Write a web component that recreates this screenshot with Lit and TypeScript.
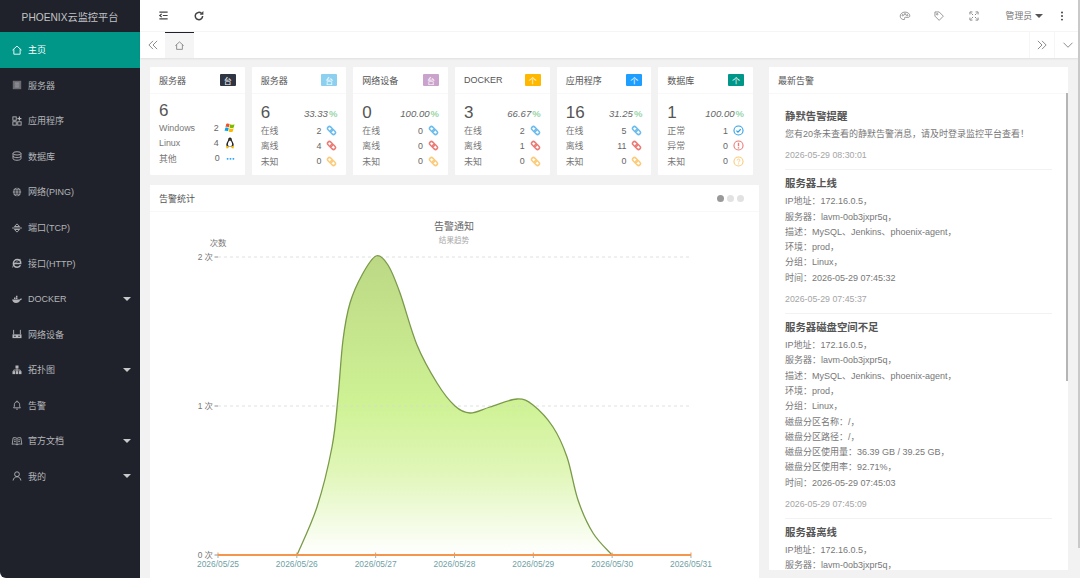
import { LitElement, html, css, svg } from 'lit';
import { customElement } from 'lit/decorators.js';

const icons: Record<string, any> = {
  home: svg`<path d="M2 8.2 8 2.8l6 5.4M3.8 7v6.6h8.4V7" />`,
  server: svg`<rect x="3" y="3" width="10" height="10" fill="currentColor" opacity=".55" /><path d="M5.5 5.5h5M5.5 8h5M5.5 10.5h5" stroke-width=".8" />`,
  app: svg`<rect x="2.5" y="2.5" width="4.5" height="4.5" /><rect x="2.5" y="9" width="4.5" height="4.5" /><rect x="9" y="9" width="4.5" height="4.5" /><path d="M11.2 2v5.4M8.5 4.7h5.4" stroke-width="1.6" />`,
  db: svg`<ellipse cx="8" cy="4.5" rx="5.3" ry="2.2" /><path d="M2.7 4.5v7c0 1.2 2.4 2.2 5.3 2.2s5.3-1 5.3-2.2v-7M2.7 8c0 1.2 2.4 2.2 5.3 2.2s5.3-1 5.3-2.2" />`,
  globe: svg`<circle cx="8" cy="8" r="5.6" fill="currentColor" opacity=".8" stroke="none" /><path d="M2.5 6.4h11M2.5 9.6h11M8 2.4c-3 3.4-3 7.8 0 11.2M8 2.4c3 3.4 3 7.8 0 11.2" stroke="#1f222b" stroke-width=".8" />`,
  port: svg`<path d="M8 2.5 11.5 6h-7zM8 13.5 11.5 10h-7zM1.5 8h13" />`,
  ie: svg`<path d="M3.5 8.6h9.4c.4-3.2-1.6-5.2-4.4-5.2-3.2 0-5.3 2.4-5.3 5.2 0 2.8 2 4.9 5.1 4.9 2.1 0 3.6-.9 4.3-2.5" stroke-width="2" /><path d="M2 14c0-2 4-8 11-11" stroke-width=".9" />`,
  docker: svg`<path fill="currentColor" stroke="none" d="M1.5 8.5h10c.5-1 1.6-1.3 3-1-.4 1.4-1.3 2-2.4 2.1-.8 2.3-2.6 3.6-5.4 3.6-3 0-4.6-1.7-5.2-4.7z" /><path fill="currentColor" stroke="none" d="M4 6h2v2H4zM6.6 6h2v2h-2zM6.6 3.6h2v2h-2z" />`,
  device: svg`<rect x="2" y="8.5" width="12" height="5" fill="currentColor" stroke="none" /><path d="M3.5 8.5V2.500M12.500 8.500V2.500" /><path d="M4 11h2.500M9.500 11H12" stroke="#1f222b" />`,
  tree: svg`<g fill="currentColor" stroke="none"><rect x="6" y="2" width="4" height="4" /><rect x="2" y="9.5" width="3.4" height="4" /><rect x="6.3" y="9.5" width="3.4" height="4" /><rect x="10.6" y="9.5" width="3.4" height="4" /></g><path d="M8 6v3.5M3.700 9.500V8h8.600v1.500" />`,
  bell: svg`<path d="M3.5 11.8c1-1 1-2.200 1-4.200 0-2.200 1.500-4 3.500-4s3.500 1.800 3.500 4c0 2 0 3.200 1 4.200zM7 13.600h2M8 2.200v1.400" />`,
  book: svg`<path d="M8 4.600C6.400 3.400 4.400 3.200 2.800 3.800L1.600 12.400c2-.6 4.600-.6 6.400.8 1.800-1.400 4.400-1.400 6.400-.8L13.200 3.800C11.600 3.200 9.600 3.400 8 4.600zM8 4.600v8.600M4 6.400h2.400M4 8.800h2.400M9.600 6.400H12M9.600 8.800H12" stroke-width="1.100" />`,
  user: svg`<circle cx="8" cy="5.600" r="3.200" /><path d="M2.800 14c.4-3 2.600-5 5.200-5s4.800 2 5.200 5" />`,
  fold: svg`<path d="M2 3h12M7 8h7M2 13h12M5.400 5.600 2.600 8l2.800 2.400" stroke-width="1.800" />`,
  refresh: svg`<path d="M12.800 8a4.900 4.900 0 1 1-1.500-3.500" stroke-width="2" /><path d="M13.800 1.400v4.800H9z" fill="currentColor" stroke="none" />`,
  palette: svg`<path d="M8 2.800C4.400 2.800 1.600 5.200 1.600 8.200c0 2.600 2.200 4.600 5 4.600 1.200 0 1-.9.8-1.600-.3-1 .3-1.600 1.400-1.500l3 .2c1.700 0 2.600-.9 2.600-2.200 0-2.700-2.800-4.900-6.400-4.900z" /><circle cx="5" cy="7" r=".9" /><circle cx="8" cy="5.600" r=".9" /><circle cx="11" cy="7" r=".9" />`,
  tag: svg`<path d="M2.600 2.600h5.600l5.600 5.600-5.600 5.600-5.600-5.600z" /><circle cx="5.600" cy="5.600" r="1" />`,
  full: svg`<path d="M1.500 5.500v-4h4M10.500 1.500h4v4M14.500 10.500v4h-4M5.500 14.500h-4v-4M6.500 6.500 4 4M9.500 6.500 12 4M9.500 9.500 12 12M6.500 9.500 4 12" stroke-width="1.400" />`,
  more: svg`<g fill="currentColor" stroke="none"><circle cx="8" cy="3.200" r="1.300" /><circle cx="8" cy="8" r="1.300" /><circle cx="8" cy="12.800" r="1.300" /></g>`,
  left: svg`<path d="M8 2.500 2.500 8 8 13.500M13.500 2.500 8 8l5.500 5.500" />`,
  right: svg`<path d="M2.500 2.500 8 8l-5.500 5.500M8 2.500 13.500 8 8 13.500" />`,
  down: svg`<path d="M2 5l6 6 6-6" />`,
  link: svg`<g transform="rotate(45 8 8)"><rect x="1" y="5.200" width="8" height="5.600" rx="2.800" stroke-width="2.200" /><rect x="7" y="5.200" width="8" height="5.600" rx="2.800" stroke-width="2.200" /></g>`,
  windows: svg`<g stroke="none"><path fill="#f25022" d="M3 2.600c1.600-.8 3-.6 4.500.2L6.600 7.100C5 6.400 3.600 6.200 2 6.900z" /><path fill="#7fba00" d="M8.200 3.100c1.800.9 3.400 1 5.800 0l-1 4.300c-1.800.9-3.800.9-5.600 0z" /><path fill="#00a4ef" d="M1.800 7.700c1.500-.7 3-.5 4.500.2l-.9 4.300c-1.600-.7-3.100-.9-4.600-.2z" /><path fill="#ffb900" d="M7.200 8.200c1.800.9 3.600.9 5.600 0l-1 4.300c-1.800.9-3.800.9-5.500 0z" /></g>`,
  linux: svg`<g stroke="none"><path fill="#222" d="M8 .8c-1.700 0-2.500 1.300-2.400 3 .1 1.400-1.900 3.300-2.400 5.400-.3 1.300.2 3.300 1 3.500h7.600c.8-.2 1.300-2.200 1-3.500-.5-2.100-2.500-4-2.400-5.400.1-1.700-.7-3-2.400-3z" /><path fill="#fff" d="M8 4.800c-1.300 0-2.800 3-2.800 5.200 0 1.500 1.200 2.400 2.800 2.400s2.800-.9 2.800-2.400c0-2.200-1.500-5.200-2.800-5.200z" /><path fill="#f5b800" d="M2.600 12.400l2.800-.9.9 3-2.800.7zM13.400 12.400l-2.800-.9-.9 3 2.800.7zM6.900 3.500h2.200L8 4.600z" /></g>`,
  dots: svg`<g fill="#1e9fff" stroke="none"><circle cx="3.800" cy="8.500" r="1.400" /><circle cx="8" cy="8.500" r="1.400" /><circle cx="12.200" cy="8.500" r="1.400" /></g>`,
  ok: svg`<circle cx="8" cy="8" r="6.600" stroke-width="1.600" /><path d="M5 8.200l2.200 2.200 4-4.200" stroke-width="1.800" />`,
  warn: svg`<circle cx="8" cy="8" r="6.600" stroke-width="1.600" /><path d="M8 4v5M8 10.600v1.600" stroke-width="2" />`,
  ask: svg`<circle cx="8" cy="8" r="6.600" stroke-width="1.600" /><path d="M6 6.400c0-2.600 4-2.600 4-.2 0 1.400-2 1.500-2 3.200M8 10.800v1.400" stroke-width="1.400" />`,
};

const icon = (name: string, cls = '') => html`<svg class="ic ${cls}" viewBox="0 0 16 16">${icons[name]}</svg>`;

const menu = [
  ['home', '主页'], ['server', '服务器'], ['app', '应用程序'], ['db', '数据库'],
  ['globe', '网络(PING)'], ['port', '端口(TCP)'], ['ie', '接口(HTTP)'],
  ['docker', 'DOCKER', 1], ['device', '网络设备'], ['tree', '拓扑图', 1],
  ['bell', '告警'], ['book', '官方文档', 1], ['user', '我的', 1],
];

const linkRows = (a: number, b: number, c: number) => [
  ['在线', a, 'link', 'blue'], ['离线', b, 'link', 'red'], ['未知', c, 'link', 'amber'],
];

const cards: any[] = [
  { title: '服务器', badge: '台', tone: 'dark', num: '6', first: true,
    rows: [['Windows', 2, 'windows', ''], ['Linux', 4, 'linux', ''], ['其他', 0, 'dots', '']] },
  { title: '服务器', badge: '台', tone: 'sky', num: '6', pct: '33.33', rows: linkRows(2, 4, 0) },
  { title: '网络设备', badge: '台', tone: 'purple', num: '0', pct: '100.00', rows: linkRows(0, 0, 0) },
  { title: 'DOCKER', badge: '个', tone: 'yellow', num: '3', pct: '66.67', rows: linkRows(2, 1, 0) },
  { title: '应用程序', badge: '个', tone: 'blue', num: '16', pct: '31.25', rows: linkRows(5, 11, 0) },
  { title: '数据库', badge: '个', tone: 'teal', num: '1', pct: '100.00',
    rows: [['正常', 1, 'ok', 'strong'], ['异常', 0, 'warn', 'red'], ['未知', 0, 'ask', 'amber']] },
];

const host = ['IP地址：172.16.0.5，', '服务器：lavm-0ob3jxpr5q，', '描述：MySQL、Jenkins、phoenix-agent，', '环境：prod，', '分组：Linux，'];

const alerts = [
  { title: '静默告警提醒', lines: ['您有20条未查看的静默告警消息，请及时登录监控平台查看！'], at: '2026-05-29 08:30:01' },
  { title: '服务器上线', lines: [...host, '时间：2026-05-29 07:45:32'], at: '2026-05-29 07:45:37' },
  { title: '服务器磁盘空间不足',
    lines: [...host, '磁盘分区名称：/，', '磁盘分区路径：/，', '磁盘分区使用量：36.39 GB / 39.25 GB，', '磁盘分区使用率：92.71%，', '时间：2026-05-29 07:45:03'],
    at: '2026-05-29 07:45:09' },
  { title: '服务器离线', lines: [...host, '时间：2026-05-29 07:40:12'], at: '2026-05-29 07:40:17' },
];

const days = ['2026/05/25', '2026/05/26', '2026/05/27', '2026/05/28', '2026/05/29', '2026/05/30', '2026/05/31'];

// traced from the reference, smoothed below
const pts = [[147, 343], [167, 295], [182, 235], [188, 185], [193, 128], [200, 91], [212, 63], [226, 44], [238, 53], [250, 81], [267, 133], [287, 171], [305, 194], [320, 201], [340, 195], [367, 187], [383, 193], [403, 215], [417, 245], [428, 288], [443, 321], [462, 343]];

const smooth = (p: number[][]) => {
  let d = `M${p[0][0]} ${p[0][1]}`;
  for (let i = 0; i < p.length - 1; i++) {
    const a = p[Math.max(i - 1, 0)], b = p[i], c = p[i + 1], e = p[Math.min(i + 2, p.length - 1)];
    const c1 = [b[0] + (c[0] - a[0]) / 6, b[1] + (c[1] - a[1]) / 6];
    const c2 = [c[0] - (e[0] - b[0]) / 6, c[1] - (e[1] - b[1]) / 6];
    d += `C${c1[0].toFixed(1)} ${c1[1].toFixed(1)} ${c2[0].toFixed(1)} ${c2[1].toFixed(1)} ${c[0]} ${c[1]}`;
  }
  return d;
};
const curve = smooth(pts);

@customElement('app-root')
class AppRoot extends LitElement {
  static styles = css`
    :host {
      display: flex;
      height: 578px;
      overflow: hidden;
      position: relative;
      background: #fff;
      font-family: "Liberation Sans", "Noto Sans CJK SC", sans-serif;
      font-size: 9px;
      color: #666;
    }
    .ic {
      width: 12px;
      height: 12px;
      flex: none;
      fill: none;
      stroke: currentColor;
      stroke-width: 1.2;
    }
    .side {
      width: 140px;
      flex: none;
      background: #1f222b;
      border-bottom-left-radius: 6px;
      color: #b4b5b8;
    }
    .logo {
      height: 32px;
      display: flex;
      align-items: center;
      justify-content: center;
      font-size: 10.2px;
      color: #c2c3c5;
    }
    .item {
      height: 35.55px;
      display: flex;
      align-items: center;
      padding: 0 8px 0 11px;
      gap: 5px;
    }
    .item.on {
      background: #009688;
      color: #fff;
    }
    .item .label {
      flex: 1;
    }
    .caret {
      width: 0;
      height: 0;
      margin-right: 1px;
      border-left: 4px solid transparent;
      border-right: 4px solid transparent;
      border-top: 4px solid #c8c9cb;
    }
    .main {
      flex: 1;
      min-width: 0;
      display: flex;
      flex-direction: column;
      background: #f2f2f2;
    }
    .top {
      height: 32px;
      flex: none;
      background: #fff;
      display: flex;
      align-items: center;
      padding-left: 18px;
      color: #444;
      border-bottom: 1px solid #f6f6f6;
      box-sizing: border-box;
    }
    .top .ic {
      width: 11px;
      height: 11px;
    }
    .top .refresh {
      width: 12px;
      height: 12px;
      margin-left: 24px;
    }
    .top-right {
      margin-left: auto;
      display: flex;
      align-items: center;
      color: #777;
    }
    .top-right .ic {
      width: 12px;
      height: 12px;
      stroke-width: 1;
    }
    .top-right .tag {
      margin-left: 22px;
    }
    .top-right .full {
      width: 10px;
      height: 10px;
      margin-left: 24px;
    }
    .admin {
      margin-left: 27px;
      font-size: 8.8px;
    }
    .admin-caret {
      margin-left: 3px;
      border-top-color: #555;
    }
    .top-right .more {
      margin: 0 12px 0 12px;
      color: #444;
    }
    .tabs {
      height: 26px;
      flex: none;
      background: #fff;
      display: flex;
      align-items: stretch;
      box-shadow: 0 1px 2px rgba(0, 0, 0, .08);
      color: #666;
    }
    .tab-btn {
      display: flex;
      align-items: center;
      justify-content: center;
      width: 25px;
    }
    .tab-btn .ic {
      width: 12px;
      height: 12px;
      stroke-width: 1;
    }
    .tab-home {
      width: 29px;
      display: flex;
      align-items: center;
      justify-content: center;
      background: #f5f5f5;
      border-top: 1px solid #1f222b;
      box-sizing: border-box;
    }
    .tab-home .ic {
      width: 11px;
      height: 11px;
      stroke-width: 1;
    }
    .tab-end {
      margin-left: auto;
      display: flex;
    }
    .tab-end .tab-btn {
      border-left: 1px solid #f6f6f6;
    }
    .tab-end .tab-btn:first-child {
      width: 24px;
    }
    .content {
      flex: 1;
      min-height: 0;
      display: flex;
      gap: 10px;
      padding: 9px 0 0 10px;
    }
    .left {
      width: 609px;
      flex: none;
      display: flex;
      flex-direction: column;
      gap: 10px;
    }
    .cards {
      display: flex;
      gap: 7px;
      padding-right: 6px;
    }
    .card {
      flex: 1;
      height: 108px;
      background: #fff;
      border-radius: 1px;
    }
    .head {
      height: 27px;
      box-sizing: border-box;
      padding: 0 9px;
      display: flex;
      align-items: center;
      justify-content: space-between;
      border-bottom: 1px solid #f8f8f8;
      color: #555;
      font-size: 9px;
    }
    .badge {
      width: 16px;
      height: 12px;
      border-radius: 1px;
      color: #fff;
      font-size: 8px;
      display: flex;
      align-items: center;
      justify-content: center;
    }
    .dark { background: #2f3542; }
    .sky { background: #8bd0ef; }
    .purple { background: #c9a3cc; }
    .yellow { background: #ffb800; }
    .azure { background: #1e9fff; }
    .teal { background: #009688; }
    .body {
      padding: 0 9px;
    }
    .stat {
      height: 29px;
      padding-top: 8px;
      box-sizing: border-box;
      display: flex;
      align-items: center;
      justify-content: space-between;
    }
    .first .stat {
      height: 26px;
    }
    .num {
      font-size: 17px;
      color: #555;
    }
    .pct {
      font-style: italic;
      font-size: 9.6px;
      color: #666;
      margin-top: 1px;
    }
    .pct b {
      font-style: normal;
      font-size: 9.5px;
      color: #9ad6a8;
      margin-left: 1px;
    }
    .row {
      height: 15.3px;
      display: flex;
      align-items: center;
      color: #777;
      font-size: 8.9px;
    }
    .row .name {
      flex: 1;
    }
    .row .val {
      color: #666;
    }
    .row .ic {
      width: 11px;
      height: 11px;
      margin-left: 5px;
    }
    .row .windows, .row .linux {
      width: 12px;
      height: 12px;
    }
    .blue { color: #6dbcec; }
    .red { color: #ea7b76; }
    .amber { color: #fbcb7a; }
    .strong { color: #2f9fe6; }
    .chart-panel {
      flex: 1;
      background: #fff;
      min-height: 0;
      overflow: hidden;
    }
    .pager {
      display: flex;
      gap: 3px;
      margin-right: 6px;
    }
    .pager i {
      width: 7px;
      height: 7px;
      border-radius: 50%;
      background: #e2e2e2;
    }
    .pager i.cur {
      background: #999;
    }
    .chart {
      display: block;
    }
    .chart text {
      font-family: "Liberation Sans", "Noto Sans CJK SC", sans-serif;
    }
    .c-title {
      font-size: 10px;
      fill: #666;
    }
    .c-sub {
      font-size: 7.6px;
      fill: #aaa;
    }
    .c-y {
      font-size: 8.4px;
      fill: #777;
    }
    .c-x {
      font-size: 8.4px;
      fill: #6f9fa6;
    }
    .grid-line {
      stroke: #d8d8d8;
      stroke-dasharray: 3 3;
      stroke-width: .8;
    }
    .tick {
      stroke: #777;
      stroke-width: .8;
    }
    .axis {
      stroke: #f5964f;
      stroke-width: 1.8;
    }
    .axis-tick {
      stroke: #f5964f;
      stroke-width: 1;
    }
    .axis-foot {
      stroke: #8fb4ba;
      stroke-width: 1;
    }
    .line {
      fill: none;
      stroke: #7a9a4a;
      stroke-width: 1.3;
    }
    .alerts {
      width: 299px;
      flex: none;
      height: 503px;
      background: #fff;
      display: flex;
      flex-direction: column;
      position: relative;
    }
    .alert-list {
      flex: 1;
      min-height: 0;
      overflow: hidden;
      padding: 15px 16px 0;
    }
    .alert + .alert {
      margin-top: 6px;
    }
    .alert h3 {
      margin: 0 0 2px;
      font-size: 10.4px;
      line-height: 16px;
      font-weight: 700;
      color: #555;
    }
    .alert p {
      margin: 0;
      font-size: 9px;
      line-height: 15.3px;
      color: #777;
      white-space: nowrap;
    }
    .alert time {
      display: block;
      margin-top: 6px;
      padding-bottom: 6px;
      font-size: 8.8px;
      line-height: 15px;
      color: #a5a5a5;
      border-bottom: 1px solid #f2f2f2;
    }
    .thumb {
      position: absolute;
      right: 0;
      top: 26px;
      width: 2px;
      height: 288px;
      background: #b5b5b5;
    }
    .page-thumb {
      position: absolute;
      right: 0;
      top: 0;
      width: 2px;
      height: 548px;
      background: #c9c9c9;
    }
  `;

  renderChart() {
    const xs = days.map((_, i) => 68 + i * 78.83);
    return html`
      <svg class="chart" width="609" height="366" viewBox="0 0 609 366">
        <defs>
          <linearGradient id="area" x1="0" y1="0" x2="0" y2="1">
            <stop offset="0" stop-color="#bcd885"></stop>
            <stop offset=".5" stop-color="#cff295"></stop>
            <stop offset=".72" stop-color="#e0f6b8"></stop>
            <stop offset="1" stop-color="#ffffff"></stop>
          </linearGradient>
        </defs>
        <text class="c-title" x="304" y="18" text-anchor="middle">告警通知</text>
        <text class="c-sub" x="304" y="31" text-anchor="middle">结果趋势</text>
        <text class="c-y" x="68" y="34" text-anchor="middle">次数</text>
        <path d="${curve}Z" fill="url(#area)"></path>
        ${[[45, '2 次'], [194, '1 次'], [343, '0 次']].map(([y, t]) => svg`
          <text class="c-y" x="63" y=${(y as number) + 3} text-anchor="end">${t}</text>
          <line class="tick" x1="64.5" x2="68" y1=${y} y2=${y}></line>
          ${y !== 343 ? svg`<line class="grid-line" x1="68" x2="541" y1=${y} y2=${y}></line>` : ''}
        `)}
        <path class="line" d=${curve}></path>
        ${xs.map((x, i) => svg`
          <line class="axis-foot" x1=${x} x2=${x} y1="343" y2="346"></line>
          <line class="axis-tick" x1=${x} x2=${x} y1="340.5" y2="343"></line>
          <text class="c-x" x=${x} y="355" text-anchor="middle">${days[i]}</text>
        `)}
        <line class="axis" x1="68" x2="541" y1="343" y2="343"></line>
      </svg>
    `;
  }

  render() {
    return html`
      <aside class="side">
        <div class="logo">PHOENIX云监控平台</div>
        ${menu.map(([ic, label, sub], i) => html`
          <div class="item ${i === 0 ? 'on' : ''}">
            ${icon(ic as string)}
            <span class="label">${label}</span>
            ${sub ? html`<span class="caret"></span>` : ''}
          </div>
        `)}
      </aside>
      <div class="main">
        <div class="top">
          ${icon('fold')}
          ${icon('refresh', 'refresh')}
          <div class="top-right">
            ${icon('palette')}
            ${icon('tag', 'tag')}
            ${icon('full', 'full')}
            <span class="admin">管理员</span>
            <span class="caret admin-caret"></span>
            ${icon('more', 'more')}
          </div>
        </div>
        <div class="tabs">
          <div class="tab-btn">${icon('left')}</div>
          <div class="tab-home">${icon('home')}</div>
          <div class="tab-end">
            <div class="tab-btn">${icon('right')}</div>
            <div class="tab-btn">${icon('down')}</div>
          </div>
        </div>
        <div class="content">
          <div class="left">
            <div class="cards">
              ${cards.map((c) => html`
                <section class="card ${c.first ? 'first' : ''}">
                  <div class="head">
                    <span>${c.title}</span>
                    <span class="badge ${c.tone === 'blue' ? 'azure' : c.tone}">${c.badge}</span>
                  </div>
                  <div class="body">
                    <div class="stat">
                      <span class="num">${c.num}</span>
                      ${c.pct ? html`<span class="pct">${c.pct}<b>%</b></span>` : ''}
                    </div>
                    ${c.rows.map((r: any[]) => html`
                      <div class="row">
                        <span class="name">${r[0]}</span>
                        <span class="val">${r[1]}</span>
                        ${icon(r[2], `${r[2]} ${r[3]}`)}
                      </div>
                    `)}
                  </div>
                </section>
              `)}
            </div>
            <section class="chart-panel">
              <div class="head">
                <span>告警统计</span>
                <span class="pager"><i class="cur"></i><i></i><i></i></span>
              </div>
              ${this.renderChart()}
            </section>
          </div>
          <section class="alerts">
            <div class="head">最新告警</div>
            <div class="alert-list">
              ${alerts.map((a) => html`
                <article class="alert">
                  <h3>${a.title}</h3>
                  ${a.lines.map((l) => html`<p>${l}</p>`)}
                  <time>${a.at}</time>
                </article>
              `)}
            </div>
            <div class="thumb"></div>
          </section>
        </div>
      </div>
      <div class="page-thumb"></div>
    `;
  }
}

declare global {
  interface HTMLElementTagNameMap {
    'app-root': AppRoot;
  }
}
